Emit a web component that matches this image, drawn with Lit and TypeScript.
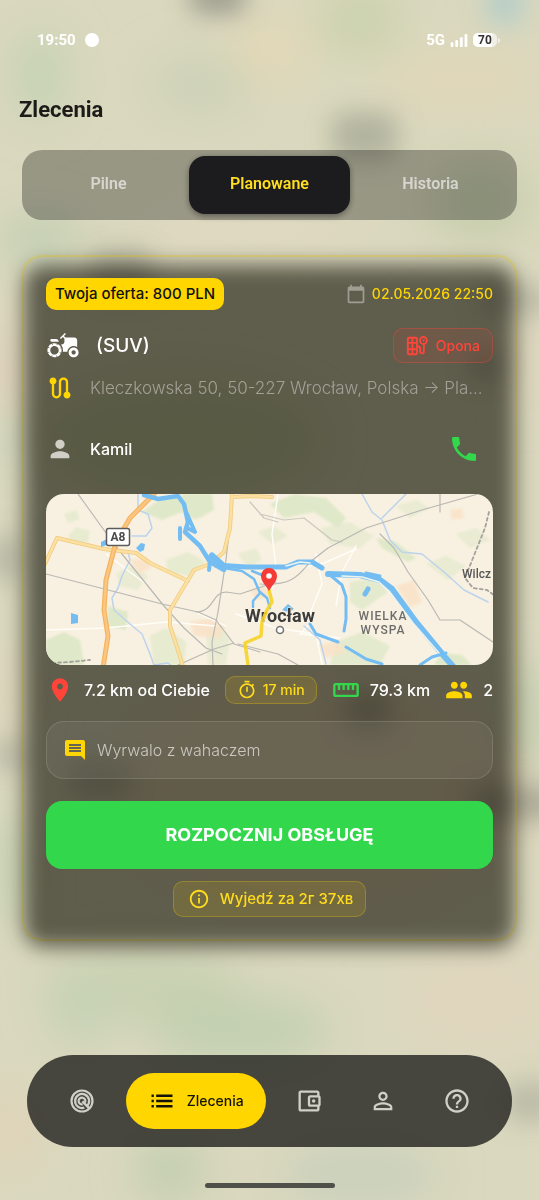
import { LitElement, html, svg, css } from "lit";
import { customElement, property, state } from "lit/decorators.js";
import { classMap } from "lit/directives/class-map.js";

const ICONS = {
  tractor: svg`<path d="M19.5 12c.93 0 1.78.28 2.5.76V8c0-1.1-.9-2-2-2h-6.29l-1.06-1.06 1.41-1.41-.71-.71-3.53 3.53.71.71 1.41-1.41L13 6.71V9c0 1.1-.9 2-2 2h-.54c.95 1.06 1.54 2.46 1.54 4 0 .34-.04.67-.09 1h3.14c.25-2.25 2.14-4 4.45-4z"/><path d="M19.5 13c-1.93 0-3.5 1.57-3.5 3.5s1.57 3.5 3.5 3.5 3.5-1.57 3.5-3.5-1.57-3.5-3.5-3.5zm0 5c-.83 0-1.5-.67-1.5-1.5s.67-1.5 1.5-1.5 1.5.67 1.5 1.5-.67 1.5-1.5 1.5zM4 9h5c0-1.1-.9-2-2-2H4c-.55 0-1 .45-1 1s.45 1 1 1z"/><path d="M9.83 13.82l-.18-.47.93-.35c-.46-1.06-1.28-1.91-2.31-2.43l-.4.89-.46-.21.4-.9C7.26 10.13 6.64 10 6 10c-.53 0-1.04.11-1.52.26l.34.91-.47.18L4 10.42c-1.06.46-1.91 1.28-2.43 2.31l.89.4-.21.46-.9-.4C1.13 13.74 1 14.36 1 15c0 .53.11 1.04.26 1.52l.91-.34.18.47-.93.35c.46 1.06 1.28 1.91 2.31 2.43l.4-.89.46.21-.4.9c.57.22 1.19.35 1.83.35.53 0 1.04-.11 1.52-.26l-.34-.91.47-.18.35.93c1.06-.46 1.91-1.28 2.43-2.31l-.89-.4.21-.46.9.4c.22-.57.35-1.19.35-1.83 0-.53-.11-1.04-.26-1.52l-.92.34zm-2.68 3.96c-1.53.63-3.29-.09-3.92-1.62-.63-1.53.09-3.29 1.62-3.92 1.53-.63 3.29.09 3.92 1.62.63 1.54-.09 3.29-1.62 3.92z"/>`,
  route: svg`<path d="M19 15.18V7c0-2.21-1.79-4-4-4s-4 1.79-4 4v10c0 1.1-.9 2-2 2s-2-.9-2-2V8.82C8.16 8.4 9 7.3 9 6c0-1.66-1.34-3-3-3S3 4.34 3 6c0 1.3.84 2.4 2 2.82V17c0 2.21 1.79 4 4 4s4-1.79 4-4V7c0-1.1.9-2 2-2s2 .9 2 2v8.18c-1.16.41-2 1.51-2 2.82 0 1.66 1.34 3 3 3s3-1.34 3-3c0-1.3-.84-2.4-2-2.82z"/>`,
  person: svg`<path d="M12 12c2.21 0 4-1.79 4-4s-1.79-4-4-4-4 1.79-4 4 1.79 4 4 4zm0 2c-2.67 0-8 1.34-8 4v2h16v-2c0-2.66-5.33-4-8-4z"/>`,
  phone: svg`<path d="M6.62 10.79c1.44 2.83 3.76 5.14 6.59 6.59l2.2-2.2c.27-.27.67-.36 1.02-.24 1.12.37 2.33.57 3.57.57.55 0 1 .45 1 1V20c0 .55-.45 1-1 1-9.39 0-17-7.61-17-17 0-.55.45-1 1-1h3.5c.55 0 1 .45 1 1 0 1.25.2 2.45.57 3.57.11.35.03.74-.25 1.02l-2.2 2.2z"/>`,
  calendar: svg`<path d="M20 3h-1V1h-2v2H7V1H5v2H4c-1.1 0-2 .9-2 2v16c0 1.1.9 2 2 2h16c1.1 0 2-.9 2-2V5c0-1.1-.9-2-2-2zm0 18H4V8h16v13z"/>`,
  tire: svg`<g fill="none" stroke="currentColor" stroke-width="2"><rect x="2" y="3" width="10" height="18" rx="1"/><path d="M7 3v18M2 8.500h10M2 15.500h10M12 12.500h1.500a2 2 0 0 1 2 2V18a2 2 0 0 0 2 2h0a2 2 0 0 0 2-2V9.500"/><circle cx="19" cy="6" r="3.800"/><path d="M18.300 6.700l1.800-1.800" stroke-width="1.600"/></g>`,
  pin: svg`<path d="M12 2C8.130 2 5 5.130 5 9c0 5.250 7 13 7 13s7-7.750 7-13c0-3.870-3.130-7-7-7zm0 9.500c-1.380 0-2.500-1.120-2.500-2.500s1.120-2.500 2.500-2.500 2.500 1.120 2.500 2.500-1.120 2.500-2.500 2.500z"/>`,
  timer: svg`<path d="M15 1H9v2h6V1zm-4 13h2V8h-2v6zm8.030-6.610l1.420-1.420c-.43-.51-.9-.99-1.410-1.410l-1.420 1.420C16.070 4.740 14.120 4 12 4c-4.970 0-9 4.030-9 9s4.020 9 9 9 9-4.030 9-9c0-2.120-.74-4.070-1.970-5.610zM12 20c-3.870 0-7-3.130-7-7s3.130-7 7-7 7 3.130 7 7-3.130 7-7 7z"/>`,
  ruler: svg`<path d="M21 6H3c-1.100 0-2 .9-2 2v8c0 1.100.9 2 2 2h18c1.100 0 2-.9 2-2V8c0-1.100-.9-2-2-2zm0 10H3V8h2v4h2V8h2v4h2V8h2v4h2V8h2v4h2V8h2v8z"/>`,
  people: svg`<path d="M16 11c1.660 0 2.990-1.340 2.990-3S17.660 5 16 5c-1.660 0-3 1.340-3 3s1.340 3 3 3zm-8 0c1.660 0 2.990-1.340 2.990-3S9.660 5 8 5C6.340 5 5 6.340 5 8s1.340 3 3 3zm0 2c-2.330 0-7 1.170-7 3.500V19h14v-2.500c0-2.330-4.670-3.500-7-3.500zm8 0c-.29 0-.62.02-.97.05 1.160.84 1.970 1.970 1.970 3.450V19h6v-2.500c0-2.330-4.670-3.500-7-3.500z"/>`,
  comment: svg`<path d="M21.990 4c0-1.100-.89-2-1.990-2H4c-1.100 0-2 .9-2 2v12c0 1.100.9 2 2 2h14l4 4-.01-18zM18 14H6v-2h12v2zm0-3H6V9h12v2zm0-3H6V6h12v2z"/>`,
  info: svg`<path d="M11 7h2v2h-2zm0 4h2v6h-2zm1-9C6.480 2 2 6.480 2 12s4.480 10 10 10 10-4.480 10-10S17.520 2 12 2zm0 18c-4.410 0-8-3.590-8-8s3.590-8 8-8 8 3.590 8 8-3.590 8-8 8z"/>`,
  radar: svg`<g fill="none" stroke="currentColor" stroke-width="1.900"><circle cx="12" cy="12" r="9"/><path d="M16.300 16.300A6 6 0 1 0 14 17.700"/><path d="M14.600 13.300A2.900 2.900 0 1 0 12.600 14.900"/><path d="M12.300 12.300l6 6" stroke-width="2"/></g>`,
  list: svg`<path d="M3 13h2v-2H3v2zm0 4.500h2v-2H3v2zm0-9h2v-2H3v2zm4 4.500h14v-2H7v2zm0 4.500h14v-2H7v2zM7 6.500v2h14v-2H7z"/>`,
  wallet: svg`<path d="M21 7.280V5c0-1.100-.9-2-2-2H5c-1.110 0-2 .9-2 2v14c0 1.100.89 2 2 2h14c1.100 0 2-.9 2-2v-2.280c.59-.35 1-.98 1-1.720V9c0-.74-.41-1.370-1-1.720zM20 9v6h-7V9h7zM5 19V5h14v2h-6c-1.100 0-2 .9-2 2v6c0 1.100.9 2 2 2h6v2H5z"/><circle cx="16" cy="12" r="1.500"/>`,
  profile: svg`<path d="M12 5.900c1.160 0 2.100.94 2.100 2.100s-.94 2.100-2.100 2.100S9.900 9.160 9.900 8s.94-2.100 2.100-2.100m0 9c2.970 0 6.100 1.460 6.100 2.100v1.100H5.900V17c0-.64 3.130-2.100 6.100-2.100M12 4C9.790 4 8 5.790 8 8s1.790 4 4 4 4-1.790 4-4-1.790-4-4-4zm0 9c-2.670 0-8 1.340-8 4v3h16v-3c0-2.660-5.330-4-8-4z"/>`,
  help: svg`<path d="M11 18h2v-2h-2v2zm1-16C6.480 2 2 6.480 2 12s4.480 10 10 10 10-4.480 10-10S17.520 2 12 2zm0 18c-4.410 0-8-3.590-8-8s3.590-8 8-8 8 3.590 8 8-3.590 8-8 8zm0-14c-2.210 0-4 1.790-4 4h2c0-1.100.9-2 2-2s2 .9 2 2c0 2-3 1.750-3 5h2c0-2.250 3-2.500 3-5 0-2.210-1.790-4-4-4z"/>`,
};

type IconName = keyof typeof ICONS;

@customElement("app-icon")
class AppIcon extends LitElement {
  @property() name: IconName = "pin";

  static styles = css`
    :host { display: inline-flex; flex: none; width: 28px; height: 28px; }
    svg { width: 100%; height: 100%; fill: currentColor; }
  `;

  render() {
    return html`<svg viewBox="0 0 24 24" aria-hidden="true">${ICONS[this.name]}</svg>`;
  }
}

@customElement("blurred-backdrop")
class BlurredBackdrop extends LitElement {
  static styles = css`
    :host { display: block; overflow: hidden; background: #dad8be; }
    svg { display: block; width: 100%; height: 100%; }
  `;

  render() {
    return html`
      <svg viewBox="0 0 539 1200" preserveAspectRatio="xMidYMid slice" aria-hidden="true">
        <defs>
          <filter id="soft" x="-50%" y="-50%" width="200%" height="200%"><feGaussianBlur stdDeviation="22" /></filter>
          <filter id="mid" x="-60%" y="-60%" width="220%" height="220%"><feGaussianBlur stdDeviation="12" /></filter>
        </defs>
        <g filter="url(#soft)">
          <ellipse cx="40" cy="75" rx="26" ry="45" fill="#c3d2b2" />
          <ellipse cx="200" cy="85" rx="50" ry="30" fill="#ccd2b8" />
          <ellipse cx="360" cy="20" rx="40" ry="34" fill="#cad1ac" />
          <ellipse cx="270" cy="50" rx="40" ry="30" fill="#e3d8b6" />
          <ellipse cx="460" cy="80" rx="80" ry="18" fill="#e4d6b5" />
          <ellipse cx="480" cy="200" rx="50" ry="40" fill="#c5cdab" />
          <ellipse cx="40" cy="240" rx="40" ry="22" fill="#bccdb0" />
          <ellipse cx="250" cy="230" rx="110" ry="20" fill="#e0d9c1" />
          <ellipse cx="5" cy="370" rx="16" ry="50" fill="#dfceb6" />
          <ellipse cx="5" cy="440" rx="14" ry="28" fill="#c5d2bb" />
          <ellipse cx="5" cy="700" rx="14" ry="40" fill="#e0d2b8" />
          <ellipse cx="8" cy="870" rx="18" ry="60" fill="#c3d2b0" />
          <ellipse cx="530" cy="360" rx="10" ry="50" fill="#e2d3bd" />
          <ellipse cx="530" cy="720" rx="14" ry="60" fill="#b9cba9" />
          <ellipse cx="140" cy="985" rx="100" ry="34" fill="#c8d1b1" />
          <ellipse cx="240" cy="1030" rx="90" ry="34" fill="#c2d0b0" />
          <ellipse cx="80" cy="1015" rx="30" ry="30" fill="#c4d2b6" />
          <ellipse cx="480" cy="1000" rx="70" ry="50" fill="#e0d6bd" />
          <ellipse cx="170" cy="1170" rx="34" ry="30" fill="#c0cdb0" />
          <ellipse cx="10" cy="1130" rx="24" ry="40" fill="#e1d3b8" />
          <ellipse cx="360" cy="1175" rx="80" ry="24" fill="#c6cfbb" />
          <ellipse cx="320" cy="790" rx="200" ry="120" fill="#e0d2b8" />
          <ellipse cx="180" cy="440" rx="140" ry="60" fill="#c8d0aa" />
        </g>
        <g filter="url(#mid)">
          <rect x="190" y="-20" width="55" height="34" rx="10" fill="#98978a" opacity="0.9" />
          <rect x="332" y="112" width="66" height="48" rx="14" fill="#989d8b" opacity="0.6" />
          <rect x="486" y="-20" width="38" height="44" rx="14" fill="#aeccca" opacity="0.8" />
          <rect x="90" y="250" width="62" height="46" rx="14" fill="#8b8b7e" opacity="0.5" />
          <rect x="480" y="285" width="70" height="30" rx="14" fill="#a9a998" opacity="0.6" />
          <rect x="470" y="350" width="30" height="30" rx="14" fill="#8b8b7e" opacity="0.5" />
          <rect x="345" y="690" width="46" height="40" rx="14" fill="#8b8b7e" opacity="0.5" />
          <rect x="70" y="760" width="60" height="40" rx="14" fill="#8b8b7e" opacity="0.4" />
          <rect x="-10" y="535" width="30" height="46" rx="12" fill="#a9a998" opacity="0.7" />
          <rect x="-10" y="740" width="36" height="30" rx="12" fill="#a9a998" opacity="0.6" />
          <rect x="470" y="786" width="90" height="34" rx="14" fill="#8f8f80" opacity="0.6" />
          <rect x="505" y="1082" width="50" height="40" rx="14" fill="#a9a998" opacity="0.6" />
        </g>
      </svg>
    `;
  }
}

@customElement("route-map")
class RouteMap extends LitElement {
  static styles = css`
    :host { display: block; aspect-ratio: 447 / 171; border-radius: 18px; overflow: hidden; background: #f8f1e1; }
    svg { display: block; width: 100%; height: 100%; }
    .line { fill: none; stroke-linecap: round; stroke-linejoin: round; }
    .city { font: 700 18px Roboto, sans-serif; fill: #3c3c3c; stroke: #f8f1e1; stroke-width: 1px; paint-order: stroke; }
    .district { font: 500 12px Roboto, sans-serif; fill: #6d6d6d; letter-spacing: 1px; }
    .village { font: 500 12px Roboto, sans-serif; fill: #585858; }
    .shield { font: 700 12px Roboto, sans-serif; fill: #4a4a4a; }
  `;

  render() {
    return html`
      <svg viewBox="0 0 447 171" preserveAspectRatio="xMidYMid slice" role="img" aria-label="Mapa: Wrocław">
        <defs><filter id="b" x="-20%" y="-20%" width="140%" height="140%"><feGaussianBlur stdDeviation="1.2" /></filter></defs>
        <g fill="#dfe8c8" filter="url(#b)">
          <path d="M96 18l20-14 34-4h16l2 16-14 8-18-6-20 8z" />
          <path d="M136 0h28l-4 14 -10 12-12-6z" />
          <path d="M22 42l8-9 14 4-2 11-14 2zM18 20l12-4 4 9-12 4z" opacity="0.7" />
          <path d="M62 112l20 6-2 18-18-4z" />
          <path d="M0 146l18-8 16 8 4 25H0z" />
          <path d="M120 66l22-8 18 10-16 14-22-4zM104 142l16-8 20 14-2 23h-30z" opacity="0.7" />
          <path d="M160 134l14-4 10 14-4 27h-18zM192 60l18-6 6 12-14 8z" opacity="0.6" />
          <path d="M224 10l24-10 32 4 20 20-8 10-24-16-30 6z" />
          <path d="M330 44l20 4 20 16-8 4-26-14z" />
          <path d="M274 34l30-6 24 14-14 12-30-4zM380 70l20-8 20 10-18 14z" opacity="0.6" />
          <path d="M304 88l24-4 14 14-26 18-12-8zM290 148l26-10 28 14-10 19h-50z" opacity="0.8" />
          <path d="M388 171l8-12 20 2 10 10z" />
          <path d="M350 12l20-6 14 8-20 10zM410 40l20-6 14 12-20 8z" opacity="0.6" />
          <path d="M70 80l16-8 16 10-10 14-18-4zM212 38l16-6 14 10-16 8z" opacity="0.6" />
        </g>
        <g fill="#f9e2c6" filter="url(#b)" opacity="0.8">
          <path d="M144 128l20-4 16 6-6 14-26-2zM84 66l16-2 6 10-14 6zM350 92l18-6 8 22-12 6z" />
          <path d="M272 152l20-6 8 12-20 6zM204 96l14-4 6 10-14 4zM404 16l12-2 2 10-12 2z" />
        </g>
        <g class="line" stroke="#fffdf7" stroke-width="1.500">
          <path d="M232 0l-6 40 4 34-4 20M310 52l-14 26-6 34M0 136l60-2 60-6 50 4M190 120l40 14 40 6 6 30M150 118l30 14M250 118l16 10-12 12 40 4" />
          <path d="M310 55l-32 14-20 4M60 60l40 30M270 60l6 30-14 34" />
        </g>
        <g class="line" stroke="#bcd3ee" stroke-width="1.500">
          <path d="M92 0v16l10 4 4 14-6 8h-14M82 58l2 8-8 16-4 12-6 10 2 12 16 14 12 10 8 20 4 11 14-2 10 8" />
          <path d="M316 0l10 18 10 8 8 20 12 12 20 2 22 18 20 18 24 12M336 24l24-24M258 132l16 14 6 24" />
        </g>
        <g class="line" stroke="#b9b8b3" stroke-width="1.200">
          <path d="M32 0l36 50 50 62 20 22 22 20 16 6M0 80l70 18 46 12 36 8 18 8 18 24 26 8" />
          <path d="M186 10l-6 56-8 52-6 30 1 23M150 118c18 0 16-20 30-20l14 2 36-12M132 171l36-16 20-6" />
          <path d="M204 8l14 16 14 4M214 20l24 6 20-2 28 22 10 2" opacity="0.7" />
          <path d="M214 90c32 2 38-8 50-22l18-14 38-20 56-18L432 0M334 40l14 14 14 24 20 28 12 20 20 0 33 22" />
          <path d="M192 150l40 10 20 11M394 18v-18" />
        </g>
        <path class="line" d="M443 18l-4 16-16 40-4 10 8 10 14 2 8 6M6 169l18-1 20-2" stroke="#a4a29d" stroke-width="1.800" stroke-dasharray="3 3" />
        <g class="line" stroke="#f3c877" stroke-width="4">
          <path d="M-2 72l13-28 47 11 32 4 14 10 38 18" />
          <path d="M186 0l-2 34-6 24-14 12-16 6-24 40v16l6 18 8 26M186 3l20-1 20 1" />
        </g>
        <g class="line" stroke="#fae0a2" stroke-width="2.500">
          <path d="M-2 72l13-28 47 11 32 4 14 10 38 18" />
          <path d="M186 0l-2 34-6 24-14 12-16 6-24 40v16l6 18 8 26M186 3l20-1 20 1" />
        </g>
        <path class="line" d="M108 0L84 24 70 48 60 86l-2 30 4 26-5 32" stroke="#f5b45f" stroke-width="5" />
        <path class="line" d="M108 0L84 24 70 48 60 86l-2 30 4 26-5 32" stroke="#fac681" stroke-width="2.500" />
        <g class="line" stroke="#74bdf3">
          <path d="M98 1l14 4 20-3 6 8 4 18-3 10 15 14 10 16 14 8" stroke-width="4.500" />
          <path d="M141 20l8 18-8-4M134 34v11M164 68l-1 8" stroke-width="4" />
          <path d="M166 62l10 9" stroke-width="7" />
          <path d="M170 71l30 2h40l12-5h14l10 6" stroke-width="5" />
          <path d="M282 80l32 1 20 5 12 9 24 33 28 34 14 16" stroke-width="6" />
          <path d="M172 73l24 4 12 8 6 14-7 8v6M206 77l10 4M214 98l7 6 3 10" stroke-width="2.500" />
          <path d="M284 81l12 10 4 12v22l-2 12M320 79l14 3" stroke-width="3" />
          <path d="M264 130l6 10 22 8M300 153l20 12 16 5M374 171l12-8 14-4" stroke-width="3" />
          <path d="M319 100l3-5" stroke-width="5" />
        </g>
        <path class="line" d="M296 82l20 1 17 5 10 9 24 32 26 30M240 72l14-4 10 1" stroke="#eef4ee" stroke-width="1.500" />
        <path d="M25 119l7 2v8l-7 1zM90 54l5-5 4 1-1 6-4 2zM55 48l6-3v6l-6 2zM236 116l6-6 6 5-6 3z" fill="#74bdf3" />
        <rect x="60.500" y="34.500" width="23" height="17" rx="2" fill="#fff" stroke="#5b5b5b" stroke-width="1.500" />
        <text class="shield" x="72" y="47" text-anchor="middle">A8</text>
        <text class="city" x="234" y="128" text-anchor="middle">Wrocław</text>
        <path class="line" d="M223 96l3 12-5 8-5 12-1 14-16 7 3 22" stroke="#f6d327" stroke-width="3.500" opacity="0.9" />
        <circle cx="234" cy="136" r="3.500" fill="#fff" stroke="#777" stroke-width="1.600" />
        <text class="district" x="337" y="126" text-anchor="middle">WIELKA</text>
        <text class="district" x="337" y="140" text-anchor="middle">WYSPA</text>
        <text class="village" x="445" y="84" text-anchor="end">Wilcz</text>
        <path d="M223 97c-3-6-8-9-8-15a8 8 0 0 1 16 0c0 6-5 9-8 15z" fill="#f43b35" />
        <circle cx="223" cy="82" r="2.800" fill="#fff" />
      </svg>
    `;
  }
}

@customElement("app-root")
class AppRoot extends LitElement {
  @state() private tab = "Planowane";
  @state() private section = "Zlecenia";

  private tabs = ["Pilne", "Planowane", "Historia"];
  private sections: { label: string; icon: IconName }[] = [
    { label: "Radar", icon: "radar" },
    { label: "Zlecenia", icon: "list" },
    { label: "Portfel", icon: "wallet" },
    { label: "Profil", icon: "profile" },
    { label: "Pomoc", icon: "help" },
  ];

  static styles = css`
    :host {
      --yellow: #ffd600;
      --green: #32d74b;
      --red: #ff453a;
      display: block;
      position: relative;
      color: #fff;
      font: 500 15px/20px Inter, sans-serif;
    }
    * { box-sizing: border-box; }
    button { font: inherit; color: inherit; border: 0; padding: 0; background: none; cursor: pointer; }
    blurred-backdrop { position: absolute; inset: 0; }
    .screen {
      position: relative;
      min-height: 100vh;
      display: flex;
      flex-direction: column;
      padding: 28px 22px 12px;
    }
    .status {
      display: flex;
      align-items: center;
      gap: 9px;
      height: 24px;
      padding: 0 17px 0 15px;
      font: 700 15px/24px Roboto, sans-serif;
    }
    .dot { width: 14px; height: 14px; border-radius: 50%; background: #fff; }
    .signals { display: flex; align-items: center; gap: 5px; margin-left: auto; }
    .bars { width: 18px; height: 13px; fill: #fff; }
    .battery {
      display: flex;
      height: 14px;
      width: 24px;
      align-items: center;
      justify-content: center;
      border-radius: 5px;
      background: linear-gradient(90deg, #fff 80%, #ffffff99 80%);
      color: #333;
      font: 700 12px/14px Roboto, sans-serif;
    }
    .cell { display: flex; align-items: center; gap: 1px; }
    .cell::after { content: ""; width: 2px; height: 5px; border-radius: 0 2px 2px 0; background: #ffffff99; }
    h1 { margin: 42px 0 0 -3px; font: 700 22px/32px Roboto, sans-serif; color: #1c1b18; }
    .tabs {
      display: grid;
      grid-template-columns: repeat(3, 1fr);
      margin-top: 24px;
      padding: 6px;
      border-radius: 20px;
      background: rgba(0, 0, 0, 0.3);
      font: 600 16px/20px Roboto, sans-serif;
    }
    .tab { height: 58px; padding-bottom: 2px; border-radius: 16px; color: rgba(255, 255, 255, 0.6); }
    .tab.active { background: #1c1c1e; color: #ffdd1f; box-shadow: 0 2px 6px rgba(0, 0, 0, 0.4); }

    .card {
      position: relative;
      margin-top: 35px;
      padding: 21px 22px 22px;
      border: 2px solid rgba(255, 214, 0, 0.3);
      border-radius: 20px;
      box-shadow: inset 0 0 12px rgba(225, 220, 200, 0.22);
      isolation: isolate;
      display: flex;
      flex-direction: column;
    }
    .card::before {
      content: "";
      position: absolute;
      z-index: -1;
      inset: 8px 0 -8px;
      border-radius: 20px;
      background: rgba(16, 14, 4, 0.61);
      filter: blur(10px);
    }
    .row { display: flex; align-items: center; }
    .offer {
      padding: 6px 9px;
      border-radius: 10px;
      background: var(--yellow);
      color: #111;
    }
    .date { margin-left: auto; display: flex; align-items: center; gap: 6px; color: var(--yellow); font-size: 14px; }
    .date app-icon { width: 20px; height: 20px; color: #a09d92; }
    .vehicle-row { margin-top: 18px; }
    .vehicle { margin-left: 16px; font-size: 19px; line-height: 24px; }
    .vehicle-row > app-icon { width: 34px; height: 34px; }
    .service {
      margin-left: auto;
      display: flex;
      align-items: center;
      gap: 8px;
      height: 35px;
      padding: 0 12px;
      border: 1px solid rgba(255, 69, 58, 0.35);
      border-radius: 10px;
      background: rgba(255, 69, 58, 0.1);
      color: var(--red);
      font-size: 14px;
    }
    .service app-icon { width: 22px; height: 22px; }
    .line { gap: 16px; }
    .address-row { margin-top: 11px; color: #a3a096; font-size: 17px; font-weight: 300; line-height: 28px; }
    .address-row app-icon { color: var(--yellow); }
    .address { white-space: nowrap; overflow: hidden; text-overflow: ellipsis; }
    .person-row { margin-top: 22px; font-size: 16px; line-height: 24px; }
    .person-row > app-icon { color: #d0cec6; }
    .call { display: flex; margin-left: auto; padding: 9px 13px; color: var(--green); }
    .call app-icon { width: 32px; height: 32px; }
    route-map { margin-top: 20px; }
    .stats { margin-top: 11px; justify-content: space-between; font-size: 16px; }
    .stat { display: flex; align-items: center; gap: 10px; white-space: nowrap; }
    .pin { color: var(--red); }
    .ruler { color: var(--green); }
    .people { color: var(--yellow); }
    .chip {
      display: flex;
      align-items: center;
      gap: 6px;
      padding: 3px 11px;
      border: 1px solid rgba(255, 214, 0, 0.25);
      border-radius: 10px;
      background: rgba(255, 214, 0, 0.12);
      color: #ffdc1c;
      font-size: 14px;
      white-space: nowrap;
    }
    .chip app-icon { width: 20px; height: 20px; }
    .note {
      display: flex;
      align-items: center;
      gap: 10px;
      margin-top: 17px;
      padding: 15px 16px;
      border: 1px solid rgba(255, 255, 255, 0.12);
      border-radius: 18px;
      background: rgba(255, 255, 255, 0.06);
      color: #cbc9c0;
      font-size: 16px;
      font-weight: 300;
      line-height: 26px;
    }
    .note app-icon { width: 24px; height: 24px; color: var(--yellow); }
    .start {
      margin-top: 22px;
      height: 68px;
      border-radius: 16px;
      background: var(--green);
      font-size: 18px;
      font-weight: 700;
    }
    .hint { align-self: center; margin-top: 12px; padding: 6px 12px 6px 14px; gap: 10px; font-size: 15px; line-height: 22px; }
    .hint app-icon { width: 22px; height: 22px; }

    nav {
      display: flex;
      align-items: center;
      justify-content: space-between;
      margin: auto 5px 0;
      padding: 18px 19px;
      border-radius: 46px;
      background: rgba(28, 28, 26, 0.78);
    }
    .nav-item { display: flex; align-items: center; gap: 11px; height: 56px; padding: 0 22px; color: #d0d0c8; font-size: 14px; }
    .nav-item.active { margin: 0 6px; border-radius: 28px; background: var(--yellow); color: #14130a; }
    .home { align-self: center; width: 130px; height: 5px; margin-top: 36px; border-radius: 3px; background: #4e5049; }
  `;

  render() {
    return html`
      <blurred-backdrop></blurred-backdrop>
      <div class="screen">
        <div class="status">
          <span>19:50</span><span class="dot"></span>
          <div class="signals">
            <span>5G</span>
            <svg class="bars" viewBox="0 0 18 14" aria-hidden="true">
              <rect x="0" y="9" width="3" height="5" rx="1" /><rect x="5" y="6.500" width="3" height="7.500" rx="1" />
              <rect x="10" y="3.500" width="3" height="10.500" rx="1" /><rect x="15" y="0" width="3" height="14" rx="1" />
            </svg>
            <span class="cell"><span class="battery">70</span></span>
          </div>
        </div>

        <h1>Zlecenia</h1>

        <div class="tabs" role="tablist">
          ${this.tabs.map((t) => html`
            <button
              class=${classMap({ tab: true, active: t === this.tab })}
              role="tab"
              aria-selected=${t === this.tab}
              @click=${() => (this.tab = t)}
            >${t}</button>
          `)}
        </div>

        <article class="card">
          <div class="row">
            <span class="offer">Twoja oferta: 800 PLN</span>
            <span class="date"><app-icon name="calendar"></app-icon>02.05.2026 22:50</span>
          </div>
          <div class="row vehicle-row">
            <app-icon name="tractor"></app-icon>
            <span class="vehicle">(SUV)</span>
            <span class="service"><app-icon name="tire"></app-icon>Opona</span>
          </div>
          <div class="row line address-row">
            <app-icon name="route"></app-icon>
            <span class="address">Kleczkowska 50, 50-227 Wrocław, Polska → Pla...</span>
          </div>
          <div class="row line person-row">
            <app-icon name="person"></app-icon>
            <span>Kamil</span>
            <button class="call" aria-label="Zadzwoń"><app-icon name="phone"></app-icon></button>
          </div>
          <route-map></route-map>
          <div class="row stats">
            <span class="stat"><app-icon class="pin" name="pin"></app-icon>7.2 km od Ciebie</span>
            <span class="chip"><app-icon name="timer"></app-icon>17 min</span>
            <span class="stat"><app-icon class="ruler" name="ruler"></app-icon>79.3 km</span>
            <span class="stat"><app-icon class="people" name="people"></app-icon>2</span>
          </div>
          <div class="note"><app-icon name="comment"></app-icon>Wyrwalo z wahaczem</div>
          <button class="start">ROZPOCZNIJ OBSŁUGĘ</button>
          <div class="chip hint"><app-icon name="info"></app-icon>Wyjedź za 2г 37хв</div>
        </article>

        <nav>
          ${this.sections.map(({ label, icon }) => html`
            <button
              class=${classMap({ "nav-item": true, active: label === this.section })}
              aria-label=${label}
              @click=${() => (this.section = label)}
            ><app-icon name=${icon}></app-icon>${label === this.section ? label : ""}</button>
          `)}
        </nav>
        <div class="home"></div>
      </div>
    `;
  }
}
